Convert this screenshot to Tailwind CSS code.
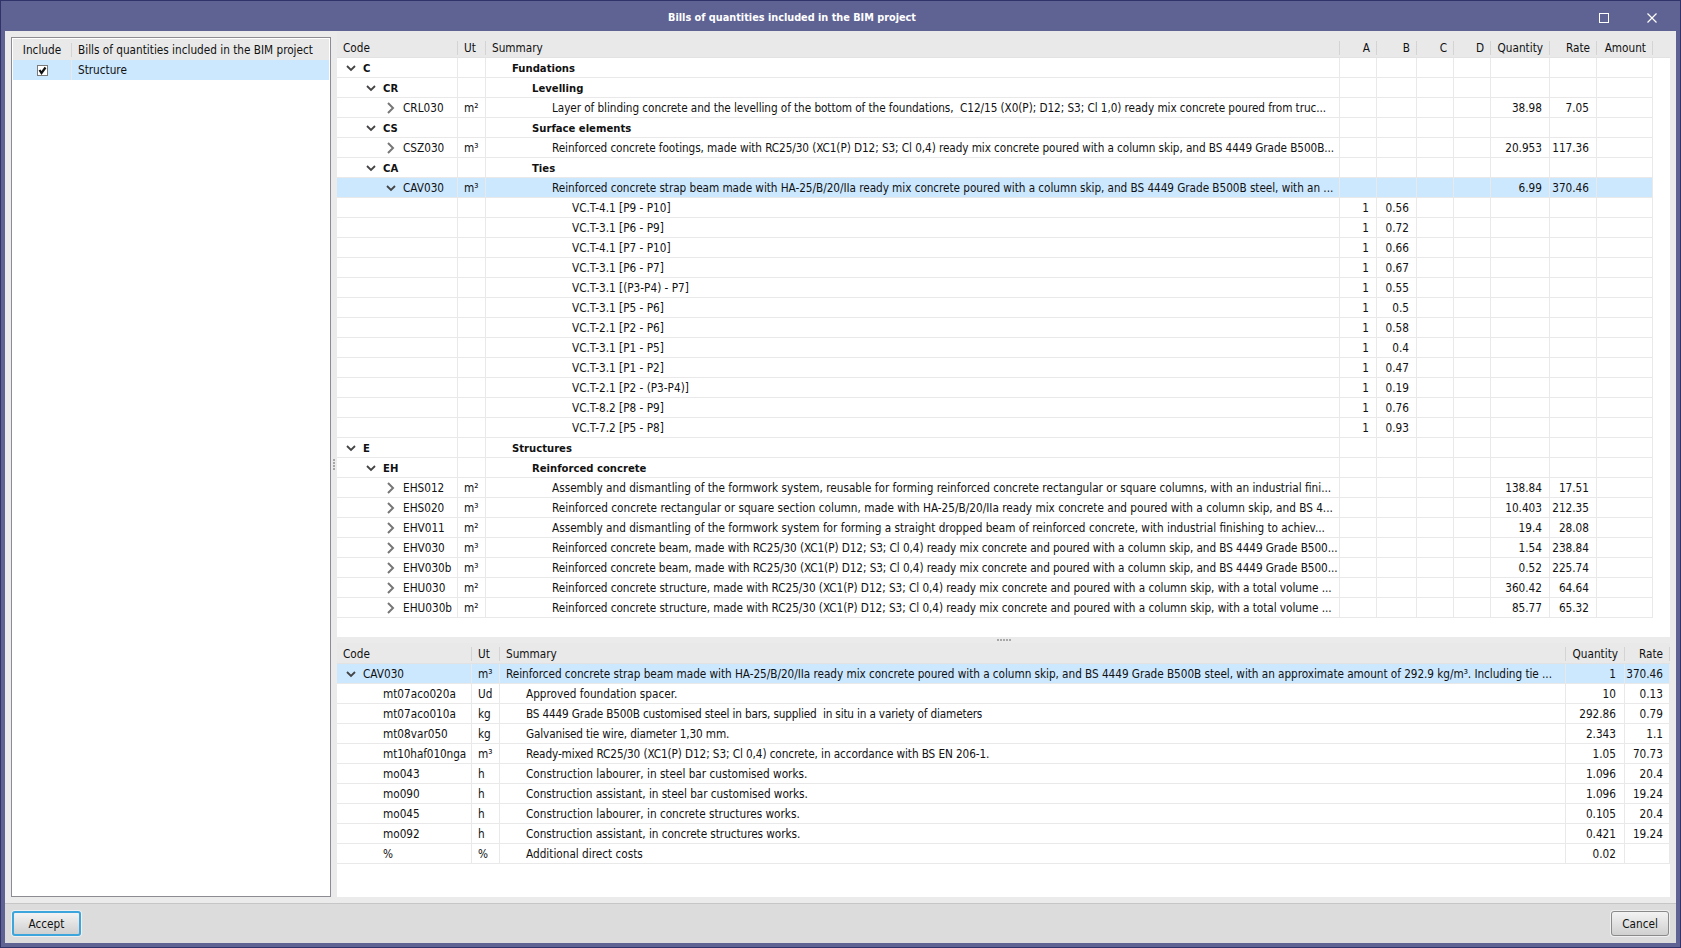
<!DOCTYPE html>
<html lang="en">
<head>
<meta charset="UTF-8">
<title>Bills of quantities included in the BIM project</title>
<script src="https://cdn.jsdelivr.net/npm/@tailwindcss/browser@4"></script>
</head>
<body class="overflow-hidden font-['DejaVu_Sans_Condensed','DejaVu_Sans',sans-serif] text-[11.7px] leading-[14px] text-[#111]">
<svg class="hidden">
  <symbol id="down" viewBox="0 0 12 12"><path d="M2 4l4 4 4-4" fill="none" stroke="#444" stroke-width="1.8"/></symbol>
  <symbol id="right" viewBox="0 0 12 12"><path d="M3 1l5 5-5 5" fill="none" stroke="#777" stroke-width="2"/></symbol>
</svg>
<div class="h-[948px] w-[1681px] flex flex-col bg-[#5f6394] border border-[#30336a] px-[4px] pb-[4px]">
  <!-- title bar -->
  <div class="h-[30px] flex items-center shrink-0">
    <div class="flex-1 text-center font-bold text-[10.8px] text-white pr-[7px] pt-[4px]">Bills of quantities included in the BIM project</div>
    <div class="w-[90px] flex items-center gap-[38px] pl-[13px] pt-[3px]">
      <svg width="10" height="10" viewBox="0 0 10 10"><rect x="0.5" y="0.5" width="9" height="9" fill="none" stroke="#fff"/></svg>
      <svg width="10" height="10" viewBox="0 0 10 10"><path d="M0.5 0.5l9 9M9.5 0.5l-9 9" stroke="#fff" stroke-width="1.2"/></svg>
    </div>
  </div>
  <div class="flex-1 flex flex-col bg-[#ebebeb] min-h-0">
    <div class="flex-1 flex px-[6px] pb-[6px] min-h-0">
      <!-- left list -->
      <div class="w-[320px] mt-[6px] border border-[#8c8c92] bg-white p-[1px]">
        <table class="table-fixed border-separate border-spacing-0 w-[316px]">
          <colgroup><col class="w-[59px]"><col></colgroup>
          <thead><tr class="h-[21px] bg-[#e9e9e9]">
            <th class="font-normal text-center align-middle"><div class="border-r border-[#d4d4d4]">Include</div></th>
            <th class="font-normal text-left align-middle"><div class="pl-[6px]">Bills of quantities included in the BIM project</div></th>
          </tr></thead>
          <tbody><tr class="h-[20px] bg-[#cce8ff]">
            <td class="border-r border-[#e9e9e9]"><svg class="mx-auto" width="11" height="11" viewBox="0 0 11 11"><rect x="0.5" y="0.5" width="10" height="10" fill="#fff" stroke="#7a7a7a"/><path d="M2.5 5l2 3 4-5.5" fill="none" stroke="#111" stroke-width="2.2"/></svg></td>
            <td class="pl-[6px]">Structure</td>
          </tr></tbody>
        </table>
      </div>
      <!-- splitter -->
      <div class="w-[6px] flex flex-col items-center justify-center gap-[1px]">
        <i class="block w-[2px] h-[2px] bg-[#a8a8a8]"></i><i class="block w-[2px] h-[2px] bg-[#a8a8a8]"></i><i class="block w-[2px] h-[2px] bg-[#a8a8a8]"></i><i class="block w-[2px] h-[2px] bg-[#a8a8a8]"></i>
      </div>
      <div class="flex-1 flex flex-col min-w-0">
        <!-- upper tree -->
        <div class="h-[606px] bg-white">
          <table class="table-fixed border-separate border-spacing-0 w-[1333px] [&_td]:h-[20px] [&_td]:border-r [&_td]:border-b [&_td]:border-[#e9e9e9] [&_td]:overflow-hidden [&_td]:whitespace-pre [&_td:nth-child(2)]:pl-[6px] [&_td:nth-child(n+4)]:text-right [&_td:nth-child(n+4)]:pr-[7px] [&_th]:bg-[#e9e9e9] [&_th]:font-normal [&_th]:align-bottom [&_th]:pb-[2px] [&_th]:border-b [&_th]:border-[#e2e2e2] [&_th>div]:h-[14px] [&_th>div]:border-r [&_th>div]:border-[#d4d4d4] [&_th>div]:px-[6px] [&_tr.font-bold]:text-[11.2px] [&_tr.font-bold>td]:pt-[2px]">
            <colgroup><col class="w-[121px]"><col class="w-[28px]"><col class="w-[854px]"><col class="w-[37px]"><col class="w-[40px]"><col class="w-[37px]"><col class="w-[37px]"><col class="w-[59px]"><col class="w-[47px]"><col class="w-[56px]"><col></colgroup>
            <thead><tr class="h-[27px]">
              <th class="text-left"><div>Code</div></th><th class="text-left"><div>Ut</div></th><th class="text-left"><div>Summary</div></th>
              <th class="text-right"><div>A</div></th><th class="text-right"><div>B</div></th><th class="text-right"><div>C</div></th><th class="text-right"><div>D</div></th>
              <th class="text-right"><div>Quantity</div></th><th class="text-right"><div>Rate</div></th><th class="text-right"><div>Amount</div></th><th></th>
            </tr></thead>
            <tbody>
<tr class="font-bold"><td class="pl-[8px]"><svg class="inline align-[-2px] mr-[6px]" width="12" height="12"><use href="#down"/></svg>C</td><td></td><td class="pl-[26px]">Fundations</td><td></td><td></td><td></td><td></td><td></td><td></td><td></td></tr>
<tr class="font-bold"><td class="pl-[28px]"><svg class="inline align-[-2px] mr-[6px]" width="12" height="12"><use href="#down"/></svg>CR</td><td></td><td class="pl-[46px]">Levelling</td><td></td><td></td><td></td><td></td><td></td><td></td><td></td></tr>
<tr><td class="pl-[48px]"><svg class="inline align-[-2px] mr-[6px]" width="12" height="12"><use href="#right"/></svg>CRL030</td><td>m²</td><td class="pl-[66px] tracking-[-0.07px]">Layer of blinding concrete and the levelling of the bottom of the foundations,  C12/15 (X0(P); D12; S3; Cl 1,0) ready mix concrete poured from truc...</td><td></td><td></td><td></td><td></td><td>38.98</td><td>7.05</td><td></td></tr>
<tr class="font-bold"><td class="pl-[28px]"><svg class="inline align-[-2px] mr-[6px]" width="12" height="12"><use href="#down"/></svg>CS</td><td></td><td class="pl-[46px]">Surface elements</td><td></td><td></td><td></td><td></td><td></td><td></td><td></td></tr>
<tr><td class="pl-[48px]"><svg class="inline align-[-2px] mr-[6px]" width="12" height="12"><use href="#right"/></svg>CSZ030</td><td>m³</td><td class="pl-[66px] tracking-[-0.08px]">Reinforced concrete footings, made with RC25/30 (XC1(P) D12; S3; Cl 0,4) ready mix concrete poured with a column skip, and BS 4449 Grade B500B...</td><td></td><td></td><td></td><td></td><td>20.953</td><td>117.36</td><td></td></tr>
<tr class="font-bold"><td class="pl-[28px]"><svg class="inline align-[-2px] mr-[6px]" width="12" height="12"><use href="#down"/></svg>CA</td><td></td><td class="pl-[46px]">Ties</td><td></td><td></td><td></td><td></td><td></td><td></td><td></td></tr>
<tr class="bg-[#cce8ff]"><td class="pl-[48px]"><svg class="inline align-[-2px] mr-[6px]" width="12" height="12"><use href="#down"/></svg>CAV030</td><td>m³</td><td class="pl-[66px] tracking-[-0.05px]">Reinforced concrete strap beam made with HA-25/B/20/IIa ready mix concrete poured with a column skip, and BS 4449 Grade B500B steel, with an ...</td><td></td><td></td><td></td><td></td><td>6.99</td><td>370.46</td><td></td></tr>
<tr><td></td><td></td><td class="pl-[86px]">VC.T-4.1 [P9 - P10]</td><td>1</td><td>0.56</td><td></td><td></td><td></td><td></td><td></td></tr>
<tr><td></td><td></td><td class="pl-[86px]">VC.T-3.1 [P6 - P9]</td><td>1</td><td>0.72</td><td></td><td></td><td></td><td></td><td></td></tr>
<tr><td></td><td></td><td class="pl-[86px]">VC.T-4.1 [P7 - P10]</td><td>1</td><td>0.66</td><td></td><td></td><td></td><td></td><td></td></tr>
<tr><td></td><td></td><td class="pl-[86px]">VC.T-3.1 [P6 - P7]</td><td>1</td><td>0.67</td><td></td><td></td><td></td><td></td><td></td></tr>
<tr><td></td><td></td><td class="pl-[86px]">VC.T-3.1 [(P3-P4) - P7]</td><td>1</td><td>0.55</td><td></td><td></td><td></td><td></td><td></td></tr>
<tr><td></td><td></td><td class="pl-[86px]">VC.T-3.1 [P5 - P6]</td><td>1</td><td>0.5</td><td></td><td></td><td></td><td></td><td></td></tr>
<tr><td></td><td></td><td class="pl-[86px]">VC.T-2.1 [P2 - P6]</td><td>1</td><td>0.58</td><td></td><td></td><td></td><td></td><td></td></tr>
<tr><td></td><td></td><td class="pl-[86px]">VC.T-3.1 [P1 - P5]</td><td>1</td><td>0.4</td><td></td><td></td><td></td><td></td><td></td></tr>
<tr><td></td><td></td><td class="pl-[86px]">VC.T-3.1 [P1 - P2]</td><td>1</td><td>0.47</td><td></td><td></td><td></td><td></td><td></td></tr>
<tr><td></td><td></td><td class="pl-[86px]">VC.T-2.1 [P2 - (P3-P4)]</td><td>1</td><td>0.19</td><td></td><td></td><td></td><td></td><td></td></tr>
<tr><td></td><td></td><td class="pl-[86px]">VC.T-8.2 [P8 - P9]</td><td>1</td><td>0.76</td><td></td><td></td><td></td><td></td><td></td></tr>
<tr><td></td><td></td><td class="pl-[86px]">VC.T-7.2 [P5 - P8]</td><td>1</td><td>0.93</td><td></td><td></td><td></td><td></td><td></td></tr>
<tr class="font-bold"><td class="pl-[8px]"><svg class="inline align-[-2px] mr-[6px]" width="12" height="12"><use href="#down"/></svg>E</td><td></td><td class="pl-[26px]">Structures</td><td></td><td></td><td></td><td></td><td></td><td></td><td></td></tr>
<tr class="font-bold"><td class="pl-[28px]"><svg class="inline align-[-2px] mr-[6px]" width="12" height="12"><use href="#down"/></svg>EH</td><td></td><td class="pl-[46px]">Reinforced concrete</td><td></td><td></td><td></td><td></td><td></td><td></td><td></td></tr>
<tr><td class="pl-[48px]"><svg class="inline align-[-2px] mr-[6px]" width="12" height="12"><use href="#right"/></svg>EHS012</td><td>m²</td><td class="pl-[66px]">Assembly and dismantling of the formwork system, reusable for forming reinforced concrete rectangular or square columns, with an industrial fini...</td><td></td><td></td><td></td><td></td><td>138.84</td><td>17.51</td><td></td></tr>
<tr><td class="pl-[48px]"><svg class="inline align-[-2px] mr-[6px]" width="12" height="12"><use href="#right"/></svg>EHS020</td><td>m³</td><td class="pl-[66px]">Reinforced concrete rectangular or square section column, made with HA-25/B/20/IIa ready mix concrete and poured with a column skip, and BS 4...</td><td></td><td></td><td></td><td></td><td>10.403</td><td>212.35</td><td></td></tr>
<tr><td class="pl-[48px]"><svg class="inline align-[-2px] mr-[6px]" width="12" height="12"><use href="#right"/></svg>EHV011</td><td>m²</td><td class="pl-[66px]">Assembly and dismantling of the formwork system for forming a straight dropped beam of reinforced concrete, with industrial finishing to achiev...</td><td></td><td></td><td></td><td></td><td>19.4</td><td>28.08</td><td></td></tr>
<tr><td class="pl-[48px]"><svg class="inline align-[-2px] mr-[6px]" width="12" height="12"><use href="#right"/></svg>EHV030</td><td>m³</td><td class="pl-[66px] tracking-[-0.08px]">Reinforced concrete beam, made with RC25/30 (XC1(P) D12; S3; Cl 0,4) ready mix concrete and poured with a column skip, and BS 4449 Grade B500...</td><td></td><td></td><td></td><td></td><td>1.54</td><td>238.84</td><td></td></tr>
<tr><td class="pl-[48px]"><svg class="inline align-[-2px] mr-[6px]" width="12" height="12"><use href="#right"/></svg>EHV030b</td><td>m³</td><td class="pl-[66px] tracking-[-0.08px]">Reinforced concrete beam, made with RC25/30 (XC1(P) D12; S3; Cl 0,4) ready mix concrete and poured with a column skip, and BS 4449 Grade B500...</td><td></td><td></td><td></td><td></td><td>0.52</td><td>225.74</td><td></td></tr>
<tr><td class="pl-[48px]"><svg class="inline align-[-2px] mr-[6px]" width="12" height="12"><use href="#right"/></svg>EHU030</td><td>m²</td><td class="pl-[66px] tracking-[-0.05px]">Reinforced concrete structure, made with RC25/30 (XC1(P) D12; S3; Cl 0,4) ready mix concrete and poured with a column skip, with a total volume ...</td><td></td><td></td><td></td><td></td><td>360.42</td><td>64.64</td><td></td></tr>
<tr><td class="pl-[48px]"><svg class="inline align-[-2px] mr-[6px]" width="12" height="12"><use href="#right"/></svg>EHU030b</td><td>m²</td><td class="pl-[66px] tracking-[-0.05px]">Reinforced concrete structure, made with RC25/30 (XC1(P) D12; S3; Cl 0,4) ready mix concrete and poured with a column skip, with a total volume ...</td><td></td><td></td><td></td><td></td><td>85.77</td><td>65.32</td><td></td></tr>
            </tbody>
          </table>
        </div>
        <!-- splitter -->
        <div class="h-[6px] flex items-center justify-center gap-[1px]">
          <i class="block w-[2px] h-[2px] bg-[#a8a8a8]"></i><i class="block w-[2px] h-[2px] bg-[#a8a8a8]"></i><i class="block w-[2px] h-[2px] bg-[#a8a8a8]"></i><i class="block w-[2px] h-[2px] bg-[#a8a8a8]"></i><i class="block w-[2px] h-[2px] bg-[#a8a8a8]"></i>
        </div>
        <!-- lower breakdown -->
        <div class="flex-1 bg-white">
          <table class="table-fixed border-separate border-spacing-0 w-[1333px] [&_td]:h-[20px] [&_td]:border-r [&_td]:border-b [&_td]:border-[#e9e9e9] [&_td]:overflow-hidden [&_td]:whitespace-pre [&_td:nth-child(2)]:pl-[6px] [&_td:nth-child(4)]:text-right [&_td:nth-child(4)]:pr-[8px] [&_td:nth-child(5)]:text-right [&_td:nth-child(5)]:pr-[6px] [&_th]:bg-[#e9e9e9] [&_th]:font-normal [&_th]:align-bottom [&_th]:pb-[2px] [&_th]:border-b [&_th]:border-[#e2e2e2] [&_th>div]:h-[14px] [&_th>div]:border-r [&_th>div]:border-[#d4d4d4] [&_th>div]:px-[6px]">
            <colgroup><col class="w-[135px]"><col class="w-[28px]"><col class="w-[1066px]"><col class="w-[59px]"><col class="w-[45px]"></colgroup>
            <thead><tr class="h-[21px]">
              <th class="text-left"><div>Code</div></th><th class="text-left"><div>Ut</div></th><th class="text-left"><div>Summary</div></th>
              <th class="text-right"><div>Quantity</div></th><th class="text-right"><div>Rate</div></th>
            </tr></thead>
            <tbody>
<tr class="bg-[#cce8ff]"><td class="pl-[8px]"><svg class="inline align-[-2px] mr-[6px]" width="12" height="12"><use href="#down"/></svg>CAV030</td><td>m³</td><td class="pl-[6px] tracking-[-0.045px]">Reinforced concrete strap beam made with HA-25/B/20/IIa ready mix concrete poured with a column skip, and BS 4449 Grade B500B steel, with an approximate amount of 292.9 kg/m³. Including tie ...</td><td>1</td><td>370.46</td></tr>
<tr><td class="pl-[46px]">mt07aco020a</td><td>Ud</td><td class="pl-[26px]">Approved foundation spacer.</td><td>10</td><td>0.13</td></tr>
<tr><td class="pl-[46px]">mt07aco010a</td><td>kg</td><td class="pl-[26px] tracking-[-0.17px]">BS 4449 Grade B500B customised steel in bars, supplied  in situ in a variety of diameters</td><td>292.86</td><td>0.79</td></tr>
<tr><td class="pl-[46px]">mt08var050</td><td>kg</td><td class="pl-[26px] tracking-[-0.15px]">Galvanised tie wire, diameter 1,30 mm.</td><td>2.343</td><td>1.1</td></tr>
<tr><td class="pl-[46px] tracking-[-0.1px]">mt10haf010nga</td><td>m³</td><td class="pl-[26px] tracking-[-0.1px]">Ready-mixed RC25/30 (XC1(P) D12; S3; Cl 0,4) concrete, in accordance with BS EN 206-1.</td><td>1.05</td><td>70.73</td></tr>
<tr><td class="pl-[46px]">mo043</td><td>h</td><td class="pl-[26px]">Construction labourer, in steel bar customised works.</td><td>1.096</td><td>20.4</td></tr>
<tr><td class="pl-[46px]">mo090</td><td>h</td><td class="pl-[26px] tracking-[-0.05px]">Construction assistant, in steel bar customised works.</td><td>1.096</td><td>19.24</td></tr>
<tr><td class="pl-[46px]">mo045</td><td>h</td><td class="pl-[26px]">Construction labourer, in concrete structures works.</td><td>0.105</td><td>20.4</td></tr>
<tr><td class="pl-[46px]">mo092</td><td>h</td><td class="pl-[26px] tracking-[-0.05px]">Construction assistant, in concrete structures works.</td><td>0.421</td><td>19.24</td></tr>
<tr><td class="pl-[46px]">%</td><td>%</td><td class="pl-[26px]">Additional direct costs</td><td>0.02</td><td></td></tr>
            </tbody>
          </table>
        </div>
      </div>
    </div>
    <!-- footer -->
    <div class="h-[40px] shrink-0 flex items-center justify-between px-[7px] bg-[#dcdcdc] border-t border-[#c6c6c6]">
      <button class="w-[69px] h-[25px] rounded-[3px] border-2 border-[#3ba5dc] bg-gradient-to-b from-[#f3f3f3] to-[#d0d0d0] shadow-[0_0_0_1px_#f0f0f0]">Accept</button>
      <button class="w-[58px] h-[25px] rounded-[3px] border border-[#8a8a8a] bg-gradient-to-b from-[#f3f3f3] to-[#d0d0d0] shadow-[0_0_0_1px_#f0f0f0]">Cancel</button>
    </div>
  </div>
</div>
</body>
</html>
